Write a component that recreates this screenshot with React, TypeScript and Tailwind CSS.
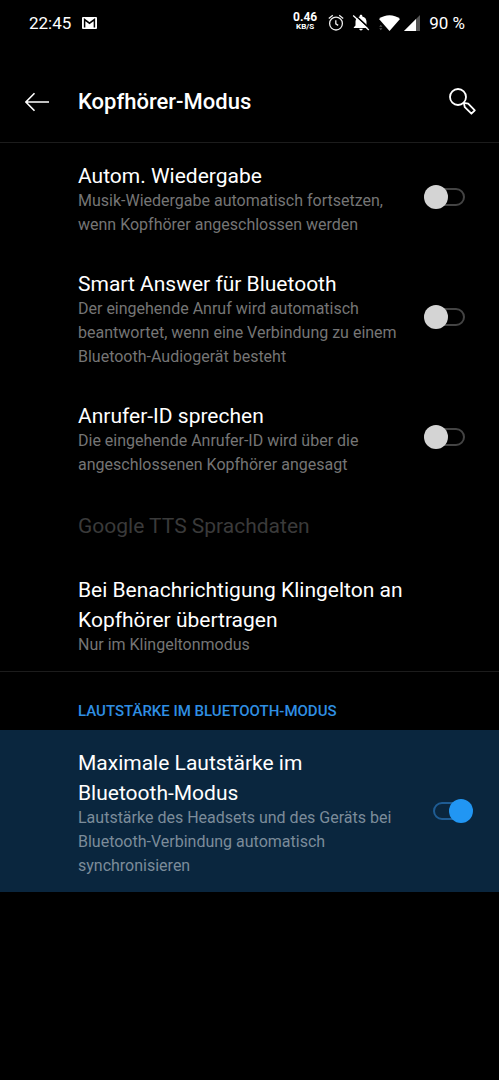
import { useState } from 'react';

interface SettingRowProps {
    id: string;
    title: string;
    description: string;
    defaultOn?: boolean;
    highlighted?: boolean;
}

const StatusBar = () => (
    <div className="flex h-[45px] items-center justify-between pl-[29px] pr-[34px] text-[17px] leading-5">
        <div className="flex items-center gap-[11px]">
            <span>22:45</span>
            <svg className="h-3 w-[15px]" viewBox="0 0 15 12" aria-label="Gmail">
                <rect width="15" height="12" rx="1" fill="#fff" />
                <path d="M2.6 10.5V2.6L7.5 6.2l4.9-3.6v7.9" fill="none" stroke="#000" strokeWidth="1.5" />
            </svg>
        </div>
        <div className="flex items-center">
            <div className="mr-[11px] flex flex-col items-center pb-0.5 font-bold">
                <span className="text-[12px] leading-[11px]">0.46</span>
                <span className="text-[8px] leading-[8px]">KB/S</span>
            </div>
            <svg className="mr-2 h-[17px] w-4" viewBox="0 0 16 17" fill="none" stroke="#eee" strokeWidth="1.3" aria-label="Wecker">
                <circle cx="8" cy="9.6" r="6.4" />
                <path d="M7.8 6.2v3.6l2.4 1.6M.8 4.4l4-3.2M15.2 4.4l-4-3.2" />
            </svg>
            <svg className="mr-[9px] h-[17px] w-[18px]" viewBox="0 0 18 17" aria-label="Stumm">
                <path
                    d="M9 .8c.8 0 1.3.5 1.3 1.2v.4c2.7.6 4.2 2.6 4.2 5.2v4l1.7 1.7v.8H1.8v-.8l1.7-1.7v-4C3.500 5 5 3 7.700 2.400V2C7.700 1.300 8.200.8 9 .8zM7.300 14.800h3.400c0 .9-.8 1.600-1.700 1.600s-1.700-.7-1.700-1.600z"
                    fill="#fff"
                />
                <path d="M2.6.6l15.300 14.200" stroke="#000" strokeWidth="1.6" />
                <path d="M1.2 1.4l15.600 14.500" stroke="#fff" strokeWidth="1.3" />
            </svg>
            <svg className="mr-1 h-4 w-[21px]" viewBox="0 0 21 16" aria-label="WLAN">
                <path d="M0 4C6-1 15-1 21 4L10.500 16z" fill="#fff" />
                <path d="M.2 11.8l1.6-2 1.6 2zM.2 13.2l1.6 2 1.6-2z" fill="#555" />
            </svg>
            <svg className="mr-[9px] h-4 w-4" viewBox="0 0 16 16" aria-label="Mobilfunk">
                <path d="M16 0v16H0z" fill="#555" />
                <path d="M12 4v12H0z" fill="#fff" />
            </svg>
            <span>90 %</span>
        </div>
    </div>
);

const Header = () => (
    <header className="flex h-[98px] items-center border-b border-[#1c1c1c] pl-[25px] pr-[22px] pt-4">
        <button type="button" aria-label="Zurück" className="mr-[29px]">
            <svg className="h-5 w-6" viewBox="0 0 24 20" fill="none" stroke="#fff" strokeWidth="1.6">
                <path d="M24 10H1M9.500 1.300L.9 10l8.600 8.700" />
            </svg>
        </button>
        <h1 className="flex-1 text-[22px] font-medium leading-[30px]">Kopfhörer-Modus</h1>
        <button type="button" aria-label="Suchen">
            <svg className="h-7 w-7" viewBox="0 0 28 28" fill="none" stroke="#fff" strokeWidth="1.8">
                <circle cx="9" cy="9" r="8" />
                <path d="M14.800 14.800l4.400.8 6.600 6.700-3.400 3.400-6.600-6.500z" strokeLinejoin="round" />
            </svg>
        </button>
    </header>
);

const SettingRow = ({ id, title, description, defaultOn = false, highlighted = false }: SettingRowProps) => {
    const [on, setOn] = useState(defaultOn);

    return (
        <div className={`flex items-center pl-[78px] pr-[26px] ${highlighted ? 'bg-[#0a263e]' : ''}`}>
            <label htmlFor={id} className="mr-6 flex-1 pb-[14px] pt-[18px]">
                <span className="block text-[21px] leading-[30px]">{title}</span>
                <span className={`-mt-0.5 block text-[16px] leading-6 ${highlighted ? 'text-[#7c8c9a]' : 'text-[#757575]'}`}>
                    {description}
                </span>
            </label>
            <input
                id={id}
                type="checkbox"
                role="switch"
                checked={on}
                onChange={() => setOn(!on)}
                className="relative flex h-6 w-[49px] appearance-none items-center justify-center before:h-[18px] before:w-8 before:rounded-full before:border-2 before:border-[#444] after:absolute after:left-0 after:size-6 after:rounded-full after:bg-[#d4d4d4] checked:before:border-[#1f5c93] checked:after:left-auto checked:after:right-0 checked:after:bg-[#2196f3]"
            />
        </div>
    );
};

const App = () => (
    <div className="min-h-screen bg-black font-[Roboto,sans-serif] text-white">
        <StatusBar />
        <Header />
        <main>
            <SettingRow
                id="autoplay"
                title="Autom. Wiedergabe"
                description="Musik-Wiedergabe automatisch fortsetzen, wenn Kopfhörer angeschlossen werden"
            />
            <SettingRow
                id="smart-answer"
                title="Smart Answer für Bluetooth"
                description="Der eingehende Anruf wird automatisch beantwortet, wenn eine Verbindung zu einem Bluetooth-Audiogerät besteht"
            />
            <SettingRow
                id="caller-id"
                title="Anrufer-ID sprechen"
                description="Die eingehende Anrufer-ID wird über die angeschlossenen Kopfhörer angesagt"
            />
            <button
                type="button"
                disabled
                className="flex h-[70px] w-full items-center pl-[78px] pr-[26px] text-left text-[21px] leading-[30px] text-[#3a3a3a]"
            >
                Google TTS Sprachdaten
            </button>
            <button type="button" className="block w-full py-[14px] pl-[78px] pr-[91px] text-left">
                <span className="block text-[21px] leading-[30px]">Bei Benachrichtigung Klingelton an Kopfhörer übertragen</span>
                <span className="-mt-0.5 block text-[16px] leading-6 text-[#757575]">Nur im Klingeltonmodus</span>
            </button>
            <section className="border-t border-[#1c1c1c]">
                <h2 className="pb-2 pl-[78px] pt-7 text-[15px] font-medium leading-[22px] text-[#2f8fe3]">
                    LAUTSTÄRKE IM BLUETOOTH-MODUS
                </h2>
                <SettingRow
                    id="max-volume"
                    title="Maximale Lautstärke im Bluetooth-Modus"
                    description="Lautstärke des Headsets und des Geräts bei Bluetooth-Verbindung automatisch synchronisieren"
                    defaultOn
                    highlighted
                />
            </section>
        </main>
    </div>
);

export default App;
